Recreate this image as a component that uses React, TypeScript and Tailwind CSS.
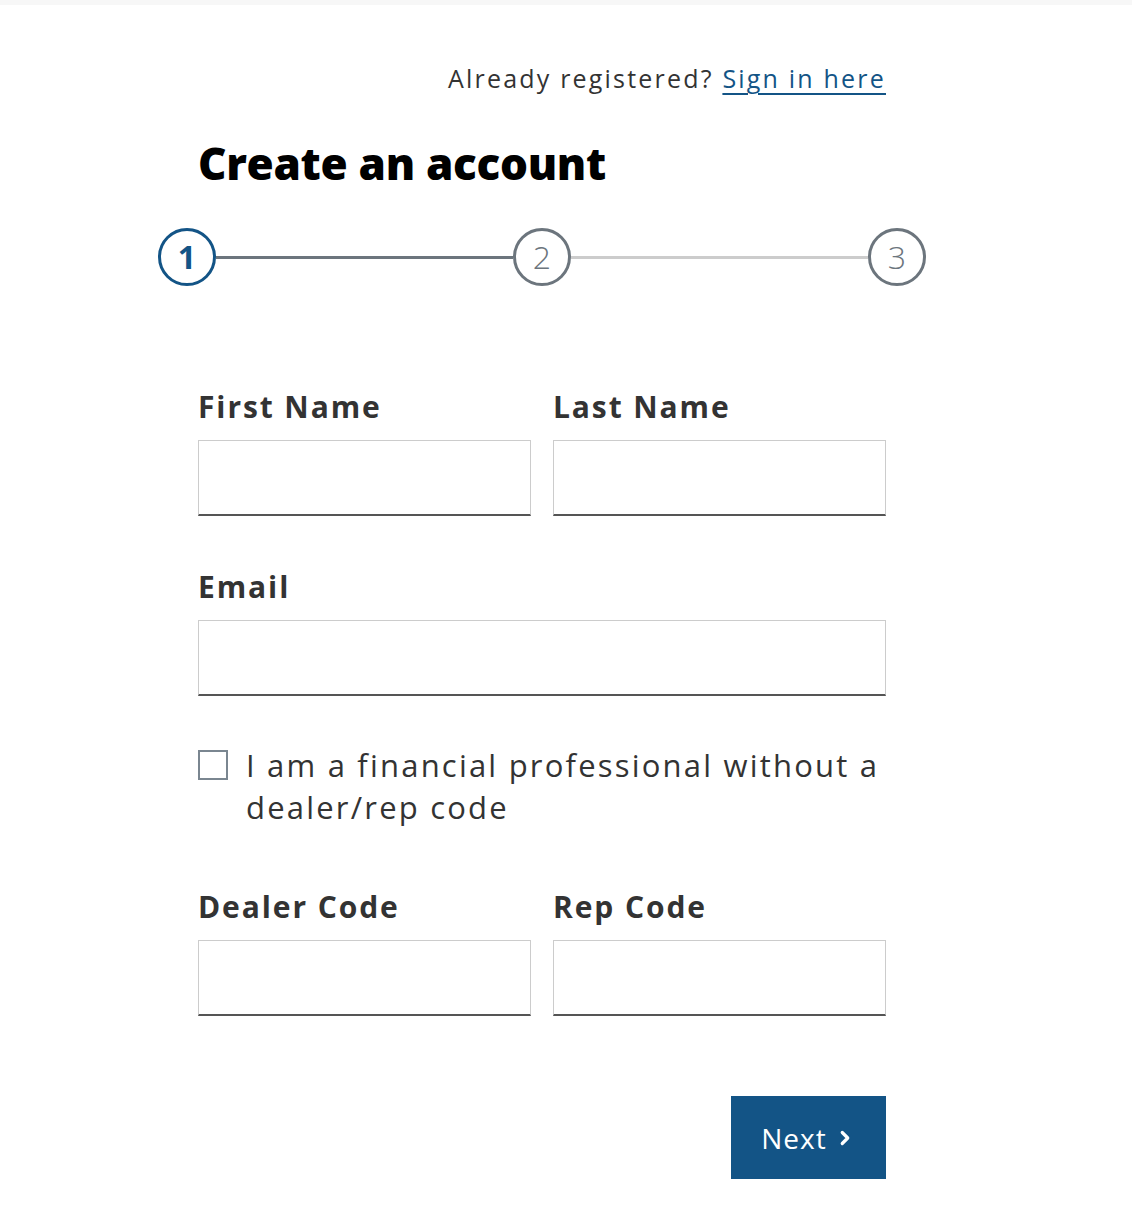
import { ChevronRight } from "lucide-react";

const font = { fontFamily: "'Open Sans', 'Liberation Sans', sans-serif" };

function Field({ label, className = "" }: { label: string; className?: string }) {
  return (
    <div className={className}>
      <label className="block text-[30px] leading-[36px] font-bold tracking-[1.9px] text-[#333333]">{label}</label>
      <div className="mt-[15px] h-[76px] border border-[#cccccc] border-b-2 border-b-[#555555] bg-white" />
    </div>
  );
}

function Step({ n, active }: { n: number; active?: boolean }) {
  return (
    <div
      className={
        active
          ? "w-[58px] h-[58px] rounded-full border-[3px] border-[#135486] text-[#135486] font-bold flex items-center justify-center text-[32px] shrink-0"
          : "w-[58px] h-[58px] rounded-full border-[3px] border-[#6c757d] text-[#6c757d] font-light flex items-center justify-center text-[32px] shrink-0"
      }
    >
      {n}
    </div>
  );
}

export default function App() {
  return (
    <div className="min-h-[1222px] bg-white" style={font}>
      <div className="h-[5px] bg-[#f7f7f7]" />

      <div className="ml-[198px] w-[688px]">
        <p className="mt-[58px] text-right text-[25px] leading-[30px] tracking-[2.2px] text-[#333333]">
          Already registered?{" "}
          <a href="#" className="text-[#135486] underline decoration-2 underline-offset-[5px]">
            Sign in here
          </a>
        </p>
        <h1 className="mt-[45px] text-[44px] leading-[50px] font-extrabold tracking-[-0.3px] text-black">
          Create an account
        </h1>
      </div>

      <div className="ml-[158px] w-[768px] mt-[40px] flex items-center">
        <Step n={1} active />
        <div className="flex-1 h-[3px] bg-[#6c757d]" />
        <Step n={2} />
        <div className="flex-1 h-[3px] bg-[#cccccc]" />
        <Step n={3} />
      </div>

      <div className="ml-[198px] w-[688px]">
        <div className="mt-[103px] grid grid-cols-2 gap-x-[22px]">
          <Field label="First Name" />
          <Field label="Last Name" />
        </div>

        <Field label="Email" className="mt-[53px]" />

        <label className="mt-[54px] flex items-start gap-[18px]">
          <span className="w-[30px] h-[30px] border-2 border-[#7a8690] bg-white shrink-0" />
          <span className="text-[31px] leading-[42px] tracking-[2.2px] text-[#333333] -mt-[6px]">
            I am a financial professional without a dealer/rep code
          </span>
        </label>

        <div className="mt-[61px] grid grid-cols-2 gap-x-[22px]">
          <Field label="Dealer Code" />
          <Field label="Rep Code" />
        </div>

        <div className="mt-[80px] flex justify-end">
          <button className="w-[155px] h-[83px] bg-[#135486] text-white text-[28px] tracking-[1px] flex items-center justify-center gap-[7px]">
            Next
            <ChevronRight size={22} strokeWidth={3.5} />
          </button>
        </div>
      </div>
    </div>
  );
}
